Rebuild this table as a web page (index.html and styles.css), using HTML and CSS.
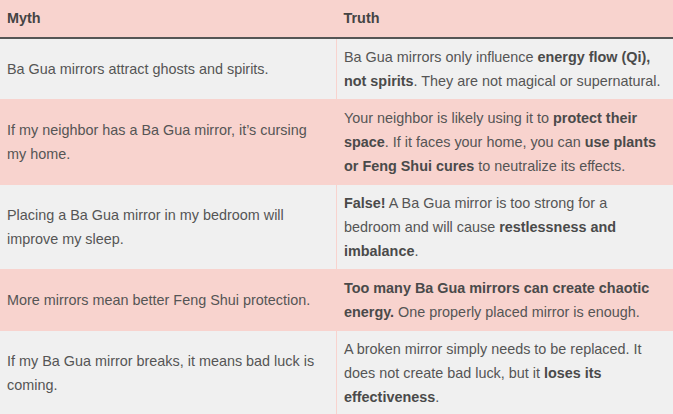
FILE: index.html
```html
<!DOCTYPE html>
<html>
<head>
<meta charset="utf-8">
<link rel="stylesheet" href="styles.css">
</head>
<body>
<table class="myths">
  <thead>
    <tr><th>Myth</th><th>Truth</th></tr>
  </thead>
  <tbody>
    <tr class="odd">
      <td>Ba Gua mirrors attract ghosts and spirits.</td>
      <td>Ba Gua mirrors only influence <b>energy flow (Qi), not spirits</b>. They are not magical or supernatural.</td>
    </tr>
    <tr class="even">
      <td>If my neighbor has a Ba Gua mirror, it’s cursing my home.</td>
      <td>Your neighbor is likely using it to <b>protect their space</b>. If it faces your home, you can <b>use plants or Feng Shui cures</b> to neutralize its effects.</td>
    </tr>
    <tr class="odd">
      <td>Placing a Ba Gua mirror in my bedroom will improve my sleep.</td>
      <td><b>False!</b> A Ba Gua mirror is too strong for a bedroom and will cause <b>restlessness and imbalance</b>.</td>
    </tr>
    <tr class="even">
      <td>More mirrors mean better Feng Shui protection.</td>
      <td><b>Too many Ba Gua mirrors can create chaotic energy.</b> One properly placed mirror is enough.</td>
    </tr>
    <tr class="odd">
      <td>If my Ba Gua mirror breaks, it means bad luck is coming.</td>
      <td>A broken mirror simply needs to be replaced. It does not create bad luck, but it <b>loses its effectiveness</b>.</td>
    </tr>
  </tbody>
</table>
</body>
</html>
```

FILE: styles.css
```css
html, body {
  margin: 0;
  padding: 0;
  background: #f0f0f0;
}
.myths {
  width: 673px;
  border-collapse: collapse;
  table-layout: fixed;
  font-family: "Liberation Sans", Arial, sans-serif;
  font-size: 14.4px;
  line-height: 24px;
  color: #555;
}
.myths th {
  background: #f8d3ce;
  color: #444;
  font-weight: bold;
  text-align: left;
  padding: 6px 11px 7px 7px;
  border-bottom: 2px solid #555;
}
.myths td {
  padding: 6px 11px 6px 7px;
  vertical-align: middle;
  border: 1px solid #f8d3ce;
  border-top: none;
  border-left: none;
}
.myths td:last-child {
  border-right: none;
}
.myths tr.odd td {
  background: #f0f0f0;
}
.myths tr.even td {
  background: #f8d3ce;
}
.myths b {
  color: #4a4a4a;
}
```
